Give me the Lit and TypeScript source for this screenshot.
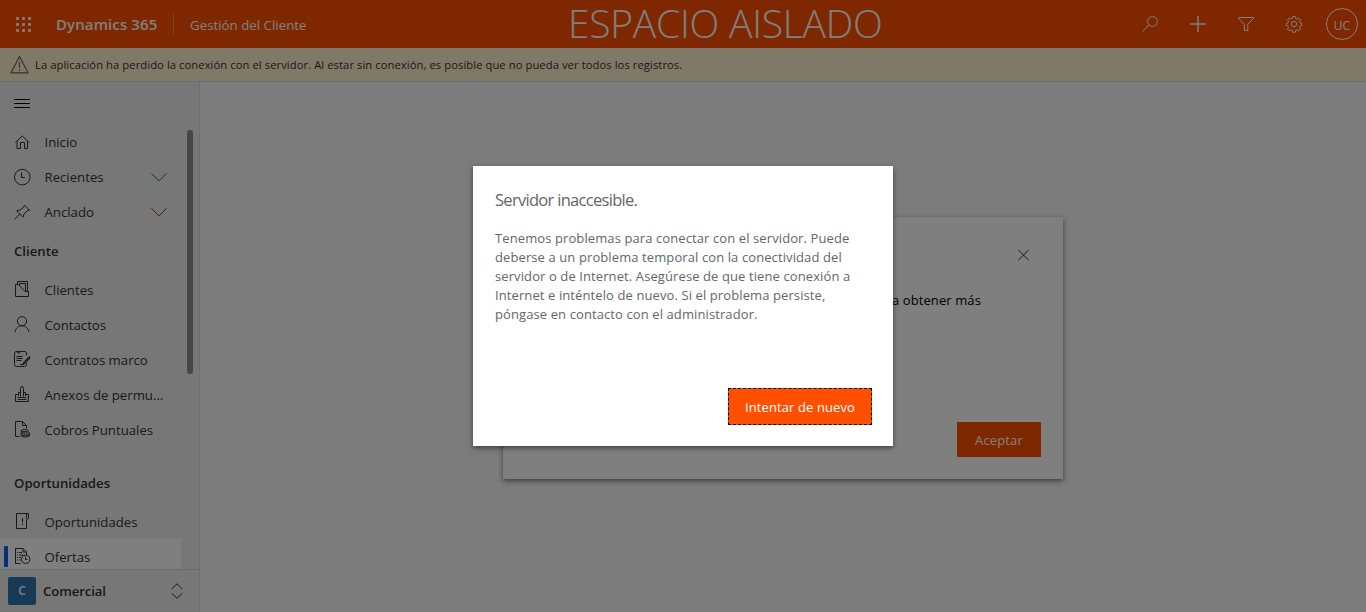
import { LitElement, html, css, svg } from "lit";
import { customElement, property } from "lit/decorators.js";
import { classMap } from "lit/directives/class-map.js";

const icons: Record<string, unknown> = {
  home: svg`<path d="M1.200 8.600 8.300 2l7.100 6.600M3 7.200V14.500H6.500V8.500H10.500V14.500H13.500V7.200"/>`,
  clock: svg`<circle cx="8.300" cy="8.100" r="7.800"/><path d="M7.500 3.500V8.500H11"/>`,
  pin: svg`<path d="M10.500 1.200 15.500 6.200 13 7 10 10 9 13.200 2.600 6.700 6 6 9.300 3.500ZM5.700 10 .800 15.300"/>`,
  clients: svg`<path d="M1.500 15.500V3.500H4.500L11 10.500H14.500V15.500ZM3.500 3.500V.500H13.500V10.500M5.500 4.500V2.500H11.500V10.500"/>`,
  person: svg`<circle cx="8" cy="5.200" r="4.600"/><path d="M1.200 16C1.500 12 4.500 9.800 8 9.800s6.500 2.200 6.800 6.200"/>`,
  contract: svg`<path d="M12.500 4.500V3Q12.500.5 11 .5H2.500Q.5.500.5 2.500V13.500Q.5 15.500 2.500 15.500H10.500Q12.500 15.500 12.500 13.500V12M2.500 5.500h6M2.500 7.500h6M2.500 9.500h5M6 13.500h4"/><path d="M15.300 5.800 9.700 11.600l-.7 1.700 1.700-.7 5-5.500ZM2.500.8H5V3" stroke-width="1.200"/>`,
  stamp: svg`<path d="M4.500 8.500H1.500V15.500H14.500V8.500H11.500M6.500 10.500V2.500Q6.500.5 8 .5t1.500 2V10.500M3.500 11.500h9M3.500 13.500h9M4.500 6.500V10M11.500 6.500V10M6.500 6.500h-2M9.500 6.500h2"/>`,
  coins: svg`<path d="M5.500 15.500h-4V.500h7l4 4V7.500M8.500.500v4h4"/><ellipse cx="10.800" cy="9.700" rx="3.600" ry="1.200"/><ellipse cx="11.500" cy="12" rx="4" ry="1.200"/><path d="M7.200 9.700v5c0 1.700 8.300 1.700 8.300 0V12M7.500 14c1 1.200 7 1.200 8 0"/>`,
  opportunity: svg`<path d="M12.500.5H2.500V15.500H12.500V6.500M12.500.5H14.500V5.500Q13.500 7 12.500 5.500V.500M8.500 5V9.500M8.500 10.500V12"/>`,
  quote: svg`<path d="M6.500 15.500H1.500V.500H9L12.500 4V7M9 .5V4h3.500M3 4.500h1M5 4.500h3M3 7h1M5 7h4M3 9.500h1M5 9.500h2M3 12h1M5 12h1.500"/><circle cx="11.700" cy="11.300" r="4.100"/><path d="M11.500 8.500V11.500h2"/>`,
  search: svg`<circle cx="10.500" cy="5.500" r="4.900"/><path d="M7 9 .4 15.600"/>`,
  plus: svg`<path stroke-width="1.400" d="M8 0v16M0 8h16"/>`,
  filter: svg`<path d="M.6 1.500H15.400V2.600L9.800 8.300V14.500H6.400V8.300L.6 2.600Z"/>`,
  gear: svg`<circle cx="8" cy="8" r="2.700"/><path d="M6.700.6h2.600l.4 1.900 1.300.6 1.700-1.100 1.800 1.900-1.100 1.600.6 1.300 1.800.4v2.500l-1.800.4-.6 1.300 1.100 1.700-1.800 1.800-1.700-1.100-1.300.6-.4 1.900H6.700l-.4-1.900L5 13.800l-1.700 1.100-1.800-1.800 1.100-1.700L2 10.100.4 9.700V7.200L2 6.800l.6-1.300-1.100-1.600L3.300 2 5 3.100l1.300-.6Z"/>`,
  chevron: svg`<path d="M.4 4.300 8 11.900l7.600-7.600"/>`,
  close: svg`<path d="M2.200 2.800 12.700 13.300M12.700 2.800 2.200 13.300"/>`,
  updown: svg`<path d="M2.700 6 8 .8 13.300 6M2.700 10.200 8 15.400l5.300-5.200"/>`,
};

@customElement("line-icon")
class LineIcon extends LitElement {
  @property() name = "";
  static styles = css`
    :host { display: block; width: 16px; height: 16px; flex: none; }
    svg { display: block; width: 16px; height: 16px; overflow: visible; fill: none; stroke: currentColor; stroke-width: 1; }
  `;
  render() {
    return html`<svg viewBox="0 0 16 16">${icons[this.name]}</svg>`;
  }
}

@customElement("app-header")
class AppHeader extends LitElement {
  static styles = css`
    :host { display: flex; height: 48px; background: #ff5000; color: #fff; align-items: center; }
    .left { display: flex; align-items: center; height: 48px; width: 568px; flex: none; }
    .waffle { display: grid; grid-template-columns: repeat(3, 3px); gap: 3px; margin: 0 25px 0 16px; }
    .waffle i { width: 3px; height: 3px; border-radius: 1px; background: #fff; }
    .brand { font-weight: 600; font-size: 15px; width: 117px; white-space: nowrap; letter-spacing: .1px; }
    .sep { width: 1px; height: 20px; background: #ff8a55; margin-right: 16px; }
    .app { font-size: 13.300px; white-space: nowrap; margin-top: 1px; }
    .title { font-weight: 300; font-size: 39px; white-space: nowrap; line-height: 46px; padding-bottom: 2px; letter-spacing: -.25px; }
    .right { flex: 1; display: flex; align-items: center; justify-content: flex-end; gap: 32px; padding-right: 8px; }
    .avatar { box-sizing: border-box; width: 32px; height: 32px; border: 1px solid #fff; border-radius: 50%; display: grid; place-items: center; font-size: 12.500px; margin-left: -8px; padding-top: 2px; }
  `;
  render() {
    return html`
      <div class="left">
        <div class="waffle">${Array.from({ length: 9 }, () => html`<i></i>`)}</div>
        <span class="brand">Dynamics 365</span><span class="sep"></span>
        <span class="app">Gestión del Cliente</span>
      </div>
      <div class="title">ESPACIO AISLADO</div>
      <div class="right">
        ${["search", "plus", "filter", "gear"].map((n) => html`<line-icon name=${n}></line-icon>`)}
        <span class="avatar">UC</span>
      </div>`;
  }
}

type Item = { icon: string; label: string; expand?: boolean; selected?: boolean };
const groups: { title?: string; items: Item[] }[] = [
  { items: [
    { icon: "home", label: "Inicio" },
    { icon: "clock", label: "Recientes", expand: true },
    { icon: "pin", label: "Anclado", expand: true },
  ] },
  { title: "Cliente", items: [
    { icon: "clients", label: "Clientes" },
    { icon: "person", label: "Contactos" },
    { icon: "contract", label: "Contratos marco" },
    { icon: "stamp", label: "Anexos de permu..." },
    { icon: "coins", label: "Cobros Puntuales" },
  ] },
  { title: "Oportunidades", items: [
    { icon: "opportunity", label: "Oportunidades" },
    { icon: "quote", label: "Ofertas", selected: true },
  ] },
];

@customElement("site-map")
class SiteMap extends LitElement {
  static styles = css`
    :host { display: flex; flex-direction: column; box-sizing: border-box; width: 200px; background: #efefef; border-right: 1px solid #dcdcdc; color: #333; font-size: 13.200px; min-height: 0; }
    .menu { height: 42px; flex: none; display: flex; flex-direction: column; gap: 3px; padding: 17px 0 0 14px; box-sizing: border-box; }
    .menu i { width: 16px; height: 1px; background: #000; }
    .scroll { display: flex; flex: 1; min-height: 0; overflow: hidden; }
    .list { width: 181px; flex: none; }
    .bar { width: 6px; height: 244px; border-radius: 3px; background: #8a8a8a; margin: 6px 0 0 6px; }
    .row { display: flex; align-items: center; height: 35px; padding-left: 14px; gap: 14.500px; position: relative; }
    .row span { flex: 1; white-space: nowrap; padding-top: 1px; }
    .row line-icon { margin-top: 1px; }
    .row.entity line-icon { margin: 0 0 1px; }
    .row .chev { margin-right: 14px; color: #2b5c85; }
    .row .chev.warm { color: #6b4a28; }
    .selected { background: #fff; }
    .selected::before { content: ""; position: absolute; left: 4px; top: 7px; width: 4px; height: 21px; border-radius: 1px; background: #0b5cff; }
    .head { font-weight: 600; height: 43px; line-height: 44px; padding-left: 14px; }
    .head.later { height: 57px; line-height: 72px; }
    .area { flex: none; box-sizing: border-box; height: 43px; border-top: 1px solid #d2d2d2; display: flex; align-items: center; padding: 0 14px 0 8px; font-weight: 600; }
    .tile { width: 28px; height: 28px; border-radius: 2px; background: #2f74ac; color: #fff; display: grid; place-items: center; font-size: 12px; margin-right: 7px; padding-bottom: 2px; box-sizing: border-box; }
    .area b { flex: 1; font-weight: 600; letter-spacing: -.1px; }
  `;
  render() {
    return html`
      <div class="menu"><i></i><i></i><i></i></div>
      <div class="scroll">
        <div class="list">
          ${groups.map((g, i) => html`
            ${g.title ? html`<div class=${classMap({ head: true, later: i > 1 })}>${g.title}</div>` : ""}
            ${g.items.map((it) => html`
              <div class=${classMap({ row: true, entity: i > 0, selected: !!it.selected })}>
                <line-icon name=${it.icon}></line-icon><span>${it.label}</span>
                ${it.expand ? html`<line-icon class=${classMap({ chev: true, warm: it.icon === "pin" })} name="chevron"></line-icon>` : ""}
              </div>`)}`)}
        </div>
        <div class="bar"></div>
      </div>
      <div class="area"><div class="tile">C</div><b>Comercial</b><line-icon name="updown"></line-icon></div>`;
  }
}

@customElement("app-root")
class AppRoot extends LitElement {
  static styles = css`
    :host { display: flex; flex-direction: column; height: 612px; position: relative; overflow: hidden; background: #f8f8f8; font-family: "Open Sans", "Noto Sans", sans-serif; font-size: 13px; }
    .banner { box-sizing: border-box; height: 34px; flex: none; background: #fff4ce; border-bottom: 1px solid #dddcd8; display: flex; align-items: center; padding-left: 10px; font-size: 11.200px; letter-spacing: .085px; color: #333; }
    .banner svg { width: 19px; height: 19px; margin-right: 6px; fill: none; stroke: #666; stroke-width: 1.200; }
    .body { display: flex; flex: 1; min-height: 0; }
    main { flex: 1; display: grid; place-items: center; padding-top: 2px; }
    .dialog { box-sizing: border-box; background: #fff; display: flex; flex-direction: column; box-shadow: 0 2px 5px rgba(0, 0, 0, .5); }
    .notice { width: 560px; height: 262px; padding: 30px 22px 22px; color: #000; }
    .close { align-self: flex-end; margin-right: 9px; color: #333; }
    .msg { padding: 27px 60px 0 0; text-align: right; line-height: 20px; flex: 1; letter-spacing: .1px; }
    .btn { align-self: flex-end; box-sizing: border-box; background: #ff5000; color: #fff; display: grid; place-items: center; }
    .accept { width: 84px; height: 35px; letter-spacing: .15px; }
    .overlay { position: absolute; inset: 0; background: rgba(0, 0, 0, .5); display: grid; place-items: center; }
    .error { width: 420px; height: 280px; padding: 22px 21px 21px 22px; color: #666; }
    h1 { margin: 0; font-size: 16.500px; line-height: 24px; font-weight: 400; letter-spacing: -.7px; }
    p { margin: 17px 0 0; line-height: 19px; flex: 1; white-space: nowrap; letter-spacing: .1px; }
    .retry { width: 144px; height: 37px; border: 1px dashed #000; letter-spacing: .1px; }
  `;
  render() {
    return html`
      <app-header></app-header>
      <div class="banner">
        <svg viewBox="0 0 19 19"><path d="M9.500 1.500 18 17.800H1ZM9.500 7v6M9.500 14.200v1.500"/></svg>
        <span>La aplicación ha perdido la conexión con el servidor. Al estar sin conexión, es posible que no pueda ver todos los registros.</span>
      </div>
      <div class="body">
        <site-map></site-map>
        <main>
          <div class="dialog notice">
            <line-icon class="close" name="close"></line-icon>
            <div class="msg">para obtener más</div>
            <div class="btn accept">Aceptar</div>
          </div>
        </main>
      </div>
      <div class="overlay">
        <div class="dialog error">
          <h1>Servidor inaccesible.</h1>
          <p>Tenemos problemas para conectar con el servidor. Puede<br />deberse a un problema temporal con la conectividad del<br />servidor o de Internet. Asegúrese de que tiene conexión a<br />Internet e inténtelo de nuevo. Si el problema persiste,<br />póngase en contacto con el administrador.</p>
          <div class="btn retry">Intentar de nuevo</div>
        </div>
      </div>`;
  }
}
